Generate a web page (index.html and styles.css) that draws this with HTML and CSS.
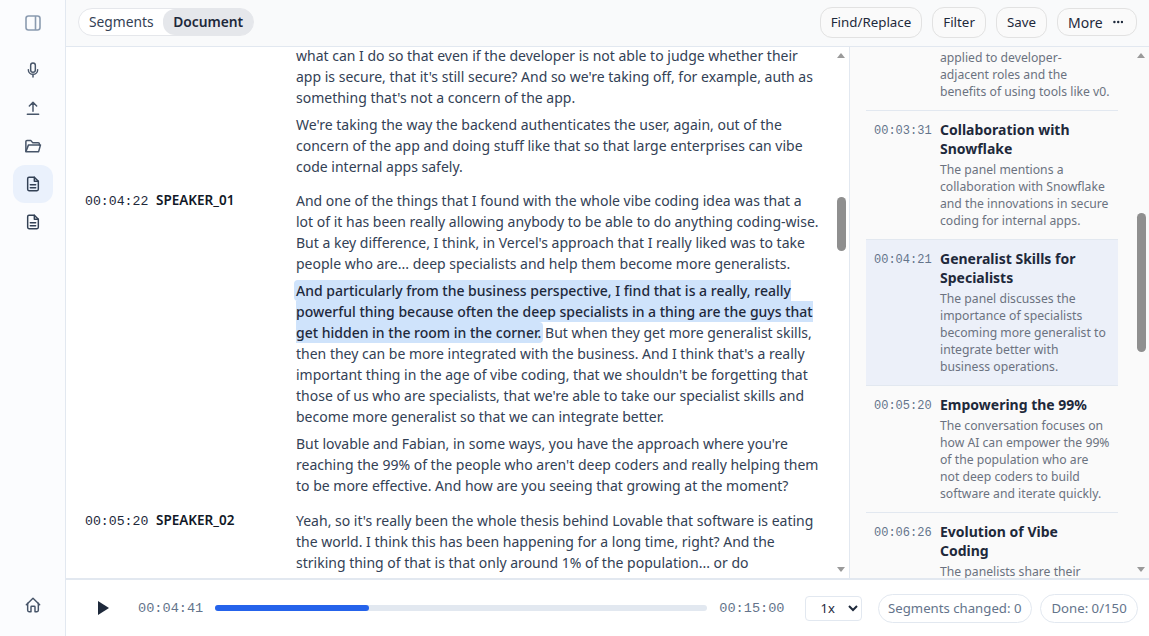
FILE: index.html
```html
<!DOCTYPE html>
<html lang="en">
<head>
  <meta charset="UTF-8" />
  <meta name="viewport" content="width=device-width, initial-scale=1.0"/>
  <title>Transcript Editor</title>
  <link rel="stylesheet" href="styles.css">
</head>
<body>

  <div class="app">
    <nav class="sidebar">
      <div class="side-toggle">
        <svg class="icon" width="18" height="18" viewBox="0 0 18 18" fill="none" stroke="#8b9bb0" stroke-width="1.6"><rect x="2" y="2" width="14" height="14" rx="2.5"/><path d="M11.5 2v14"/></svg>
      </div>
      <div class="side-items">
        <div class="side-item">
          <svg class="icon" width="16" height="16" viewBox="0 0 24 24" fill="none" stroke="#475569" stroke-width="2.2" stroke-linecap="round" stroke-linejoin="round"><rect x="8.5" y="1.5" width="7" height="14" rx="3.5"/><path d="M5 11.5a7 7 0 0 0 14 0M12 18.5v4"/></svg>
        </div>
        <div class="side-item">
          <svg class="icon" width="16" height="16" viewBox="0 0 24 24" fill="none" stroke="#475569" stroke-width="2.2" stroke-linecap="round" stroke-linejoin="round"><path d="M3.500 21.500h17M12 17V3.500M6.500 9 12 3.500 17.500 9"/></svg>
        </div>
        <div class="side-item">
          <svg class="icon" width="18" height="18" viewBox="0 0 24 24" fill="none" stroke="#475569" stroke-width="2" stroke-linecap="round" stroke-linejoin="round"><path d="M2.5 19V6a1.5 1.5 0 0 1 1.5-1.500h5l2.500 3H19a1.500 1.500 0 0 1 1.500 1.500v1.500"/><path d="M6 10.500h16l-2.500 9H2.500z"/></svg>
        </div>
        <div class="side-item active">
          <svg class="icon" width="16" height="16" viewBox="0 0 24 24" fill="none" stroke="#334155" stroke-width="2.2" stroke-linecap="round" stroke-linejoin="round"><path d="M14 2H6a2 2 0 0 0-2 2v16a2 2 0 0 0 2 2h12a2 2 0 0 0 2-2V8z"/><path d="M14 2v6h6M8 13h8M8 17.500h8"/></svg>
        </div>
        <div class="side-item">
          <svg class="icon" width="16" height="16" viewBox="0 0 24 24" fill="none" stroke="#334155" stroke-width="2.2" stroke-linecap="round" stroke-linejoin="round"><path d="M14 2H6a2 2 0 0 0-2 2v16a2 2 0 0 0 2 2h12a2 2 0 0 0 2-2V8z"/><path d="M14 2v6h6M8 13h8M8 17.500h8"/></svg>
        </div>
      </div>
      <div class="side-item home">
        <svg class="icon" width="16" height="16" viewBox="0 0 24 24" fill="none" stroke="#475569" stroke-width="2.2" stroke-linecap="round" stroke-linejoin="round"><path d="M2 11.500 12 2l10 9.500"/><path d="M4 9.500V20a2 2 0 0 0 2 2h3v-7a1 1 0 0 1 1-1h4a1 1 0 0 1 1 1v7h3a2 2 0 0 0 2-2V9.500"/></svg>
      </div>
    </nav>

    <div class="main">
      <header class="topbar">
        <div class="tabs">
          <div class="tab">Segments</div>
          <div class="tab active">Document</div>
        </div>
        <div class="actions">
          <button class="btn">Find/Replace</button>
          <button class="btn">Filter</button>
          <button class="btn">Save</button>
          <button class="btn more">More
            <svg width="11" height="4" viewBox="0 0 11 4" fill="#1e293b"><circle cx="1.500" cy="2" r="1.300"/><circle cx="5.500" cy="2" r="1.300"/><circle cx="9.500" cy="2" r="1.300"/></svg>
          </button>
        </div>
      </header>

      <div class="content">
        <section class="transcript">
          <div class="doc">
            <div class="turn first">
              <div class="turn-head"></div>
              <div class="turn-body">
                <p>what can I do so that even if the developer is not able to judge whether their app is secure, that it's still secure? And so we're taking off, for example, auth as something that's not a concern of the app.</p>
                <p>We're taking the way the backend authenticates the user, again, out of the concern of the app and doing stuff like that so that large enterprises can vibe code internal apps safely.</p>
              </div>
            </div>
            <div class="turn">
              <div class="turn-head"><span class="stamp">00:04:22</span><span class="speaker">SPEAKER_01</span></div>
              <div class="turn-body">
                <p>And one of the things that I found with the whole vibe coding idea was that a lot of it has been really allowing anybody to be able to do anything coding-wise. But a key difference, I think, in Vercel's approach that I really liked was to take people who are... deep specialists and help them become more generalists.</p>
                <p><mark>And particularly from the business perspective, I find that is a really, really powerful thing because often the deep specialists in a thing are the guys that get hidden in the room in the corner.</mark> But when they get more generalist skills, then they can be more integrated with the business. And I think that's a really important thing in the age of vibe coding, that we shouldn't be forgetting that those of us who are specialists, that we're able to take our specialist skills and become more generalist so that we can integrate better.</p>
                <p>But lovable and Fabian, in some ways, you have the approach where you're reaching the 99% of the people who aren't deep coders and really helping them to be more effective. And how are you seeing that growing at the moment?</p>
              </div>
            </div>
            <div class="turn">
              <div class="turn-head"><span class="stamp">00:05:20</span><span class="speaker">SPEAKER_02</span></div>
              <div class="turn-body">
                <p>Yeah, so it's really been the whole thesis behind Lovable that software is eating the world. I think this has been happening for a long time, right? And the striking thing of that is that only around 1% of the population... or do</p>
              </div>
            </div>
          </div>
          <div class="scrollbar">
            <span class="arrow up"></span>
            <span class="thumb doc-thumb"></span>
            <span class="arrow down"></span>
          </div>
        </section>

        <aside class="outline">
          <div class="outline-list">
            <div class="chapter first">
              <div class="chapter-time"></div>
              <div class="chapter-text">
                <p class="chapter-desc">applied to developer-adjacent roles and the benefits of using tools like v0.</p>
              </div>
            </div>
            <div class="chapter">
              <div class="chapter-time">00:03:31</div>
              <div class="chapter-text">
                <h3>Collaboration with Snowflake</h3>
                <p class="chapter-desc">The panel mentions a collaboration with Snowflake and the innovations in secure coding for internal apps.</p>
              </div>
            </div>
            <div class="chapter current">
              <div class="chapter-time">00:04:21</div>
              <div class="chapter-text">
                <h3>Generalist Skills for Specialists</h3>
                <p class="chapter-desc">The panel discusses the importance of specialists becoming more generalist to integrate better with business operations.</p>
              </div>
            </div>
            <div class="chapter">
              <div class="chapter-time">00:05:20</div>
              <div class="chapter-text">
                <h3>Empowering the 99%</h3>
                <p class="chapter-desc">The conversation focuses on how AI can empower the 99% of the population who are not deep coders to build software and iterate quickly.</p>
              </div>
            </div>
            <div class="chapter">
              <div class="chapter-time">00:06:26</div>
              <div class="chapter-text">
                <h3>Evolution of Vibe Coding</h3>
                <p class="chapter-desc">The panelists share their</p>
              </div>
            </div>
          </div>
          <div class="scrollbar">
            <span class="arrow up"></span>
            <span class="thumb outline-thumb"></span>
            <span class="arrow down"></span>
          </div>
        </aside>
      </div>

      <footer class="player">
        <svg class="play" width="14" height="14" viewBox="0 0 14 14" fill="#1e293b"><path d="M2 0 13 7 2 14z"/></svg>
        <span class="time now">00:04:41</span>
        <div class="progress"><div class="progress-fill" style="width: 31.300%"></div></div>
        <span class="time total">00:15:00</span>
        <select class="speed">
          <option>1x</option>
          <option>1.5x</option>
          <option>2x</option>
        </select>
        <span class="pill first-pill">Segments changed: 0</span>
        <span class="pill done-pill">Done: 0/150</span>
      </footer>
    </div>
  </div>

</body>
</html>
```

FILE: styles.css
```css
* {
  box-sizing: border-box;
  margin: 0;
  padding: 0;
}

html, body {
  height: 100%;
  overflow: hidden;
}

body {
  font-family: "Noto Sans", sans-serif;
  color: #1e293b;
  background: #fff;
}

.app {
  display: flex;
  height: 100vh;
}

.icon {
  display: block;
}

/* sidebar */
.sidebar {
  width: 66px;
  flex: none;
  display: flex;
  flex-direction: column;
  align-items: center;
  background: #fbfcfe;
  border-right: 1px solid #e2e8f0;
}

.side-toggle {
  height: 46px;
  display: flex;
  align-items: center;
  justify-content: center;
  margin-left: 1px;
}

.side-items {
  flex: 1;
  display: flex;
  flex-direction: column;
  align-items: center;
  padding-top: 5px;
}

.side-item {
  width: 40px;
  height: 38px;
  border-radius: 12px;
  display: flex;
  align-items: center;
  justify-content: center;
}

.side-item.active {
  background: #eaf1fc;
}

.side-item.home {
  margin-bottom: 12px;
}

/* top bar */
.main {
  flex: 1;
  min-width: 0;
  display: flex;
  flex-direction: column;
}

.topbar {
  height: 47px;
  flex: none;
  display: flex;
  align-items: center;
  justify-content: space-between;
  padding: 0 12px 2px;
  background: #f9fafb;
  border-bottom: 1px solid #e2e8f0;
}

.tabs {
  display: flex;
  height: 28px;
  background: #fff;
  border: 1px solid #e5e7eb;
  border-radius: 14px;
}

.tab {
  padding: 0 9.500px 0 10px;
  font-size: 13.800px;
  line-height: 26px;
  color: #334155;
}

.tab.active {
  font-weight: 600;
  color: #1e293b;
  background: #e5e7eb;
  border-radius: 12px;
}

.actions {
  display: flex;
  align-items: center;
  gap: 10px;
}

.btn {
  height: 31px;
  padding: 0 10px;
  font-family: inherit;
  font-size: 13.330px;
  color: #1e293b;
  background: #fafafa;
  border: 1px solid #e2e2e2;
  border-radius: 12px;
}

.btn.more {
  display: flex;
  align-items: center;
  gap: 10px;
  width: 80px;
  height: 28px;
  padding: 0 13px 0 10px;
  font-size: 14px;
}

/* main panes */
.content {
  flex: 1;
  min-height: 0;
  display: flex;
}

.transcript {
  flex: 1;
  min-width: 0;
  display: flex;
  border-right: 1px solid #e2e8f0;
}

.doc {
  flex: 1;
  min-width: 0;
  overflow: hidden;
  padding: 0 0 0 19px;
}

.turn {
  display: flex;
  margin-top: 7.400px;
}

.turn.first {
  margin-top: -2px;
}

.turn-head {
  width: 211px;
  flex: none;
  display: flex;
  align-items: baseline;
  line-height: 21px;
}

.stamp {
  font-family: "Liberation Mono", monospace;
  font-size: 13.200px;
  color: #1e293b;
  width: 71px;
  flex: none;
}

.speaker {
  font-size: 13.500px;
  font-weight: 600;
  color: #111827;
}

.turn-body {
  width: 525px;
  flex: none;
}

.turn-body p {
  font-size: 14px;
  line-height: 21px;
  color: #334155;
  margin-bottom: 6px;
}

mark {
  background: #cfe3fb;
  color: #1e293b;
  font-weight: 500;
  border-radius: 4px;
  padding: 1px 2px;
  margin: 0 -2px;
}

/* fake scrollbars */
.scrollbar {
  width: 16px;
  flex: none;
  display: flex;
  flex-direction: column;
  align-items: center;
  padding: 6px 0;
}

.arrow {
  width: 0;
  height: 0;
  border-left: 4.500px solid transparent;
  border-right: 4.500px solid transparent;
  flex: none;
}

.arrow.up {
  border-bottom: 5px solid #9a9a9a;
}

.arrow.down {
  border-top: 5px solid #9a9a9a;
  margin-top: auto;
}

.thumb {
  width: 9px;
  background: #8f8f8f;
  border-radius: 5px;
  flex: none;
}

.doc-thumb {
  height: 54px;
  margin-top: 139px;
}

.outline-thumb {
  height: 139px;
  margin-top: 155px;
}

/* outline */
.outline {
  width: 299px;
  flex: none;
  display: flex;
  background: #fafafa;
  padding-left: 16px;
  gap: 15px;
}

.outline-list {
  flex: 1;
  min-width: 0;
  overflow: hidden;
}

.chapter {
  display: flex;
  padding: 9px 7.600px 10px 8px;
  border-bottom: 1px solid #e2e8f0;
}

.chapter.first {
  padding-top: 2px;
  padding-bottom: 10px;
}

.chapter.current {
  background: #ecf0f9;
}

.chapter-time {
  width: 66px;
  flex: none;
  font-family: "Liberation Mono", monospace;
  font-size: 12px;
  line-height: 19px;
  padding-top: 2px;
  color: #64748b;
}

.chapter-text {
  flex: 1;
  min-width: 0;
}

.chapter-text h3 {
  font-size: 14px;
  font-weight: 700;
  line-height: 19px;
  color: #1e293b;
  margin-bottom: 3px;
  padding-right: 3px;
}

.chapter-desc {
  font-size: 12.200px;
  line-height: 17px;
  color: #6b7280;
}

/* player */
.player {
  height: 58px;
  flex: none;
  display: flex;
  align-items: center;
  padding: 0 12px 0 30px;
  background: #fff;
  border-top: 2px solid #e2e8f0;
}

.play {
  flex: none;
  margin-right: 28px;
}

.time {
  font-family: "Liberation Mono", monospace;
  font-size: 13.600px;
  color: #64748b;
  flex: none;
}

.progress {
  width: 492px;
  height: 6px;
  flex: none;
  margin: 0 12px;
  border-radius: 3px;
  background: #e2e8f0;
}

.progress-fill {
  height: 100%;
  background: #2563eb;
  border-radius: 3px;
}

.speed {
  width: 57px;
  height: 25px;
  margin: 0 16px 0 20px;
  padding-left: 11px;
  font-family: inherit;
  font-size: 13px;
  color: #1e293b;
  background: #fff;
  border: 1px solid #e2e8f0;
  border-radius: 4px;
}

.pill {
  height: 29px;
  padding: 0 9.500px;
  font-size: 13.200px;
  line-height: 27px;
  color: #64748b;
  background: #fff;
  border: 1px solid #e2e8f0;
  border-radius: 15px;
  flex: none;
}

.first-pill {
  margin-right: 8px;
}

.done-pill {
  padding: 0 10.500px;
}
```
